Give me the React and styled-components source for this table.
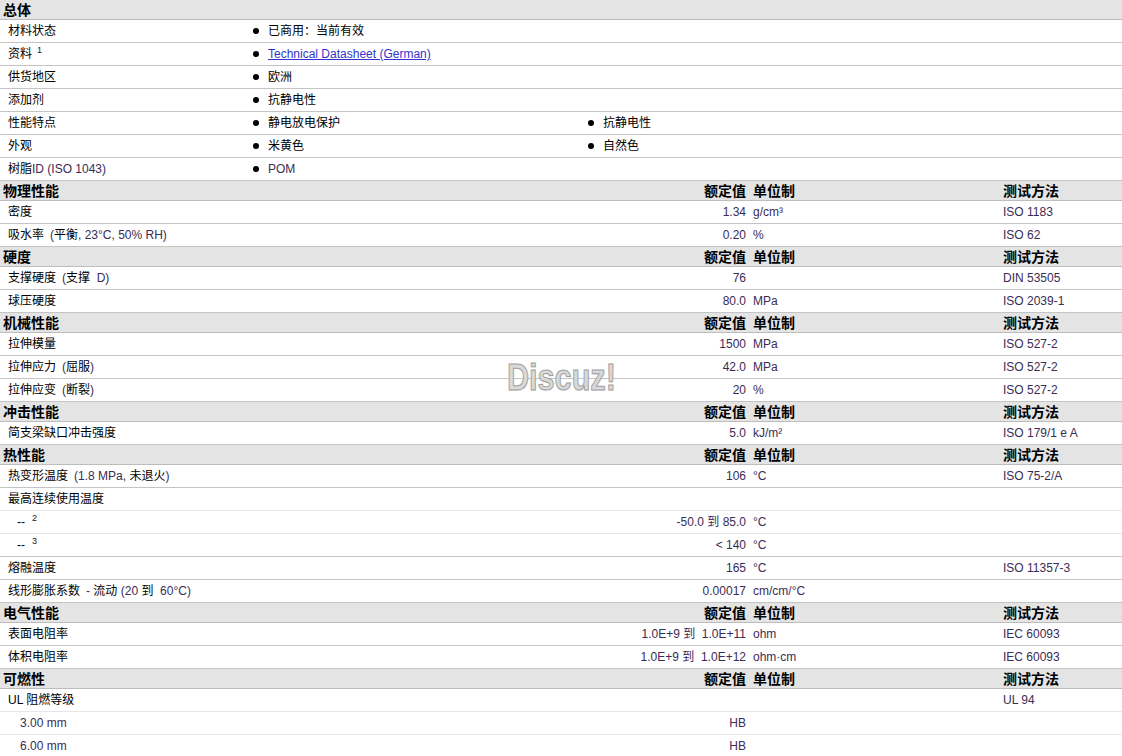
import React from "react";
import styled, { createGlobalStyle } from "styled-components";

const GlobalStyle = createGlobalStyle`
  html, body {
    margin: 0;
    padding: 0;
    background: #fff;
    overflow: hidden;
  }
  body {
    font-family: "Liberation Sans", "Noto Sans CJK SC", Arial, sans-serif;
    font-size: 12px;
    color: #000;
  }
`;

const COLS = "500px 248px 252px 1fr";

const general = [
  { label: "材料状态", items: ["已商用：当前有效"] },
  { label: "资料", sup: "1", items: [{ link: "Technical Datasheet (German)" }] },
  { label: "供货地区", items: ["欧洲"] },
  { label: "添加剂", items: ["抗静电性"] },
  { label: "性能特点", items: ["静电放电保护", "抗静电性"] },
  { label: "外观", items: ["米黄色", "自然色"] },
  { label: "树脂", note: "ID (ISO 1043)", items: [{ latin: "POM" }] },
];

const sections = [
  {
    title: "物理性能",
    rows: [
      { label: "密度", value: "1.34", unit: "g/cm³", method: "ISO 1183" },
      { label: "吸水率", note: ["(", "平衡", ", 23°C, 50% RH)"], value: "0.20", unit: "%", method: "ISO 62" },
    ],
  },
  {
    title: "硬度",
    rows: [
      { label: "支撑硬度", note: ["(", "支撑", "  D)"], value: "76", unit: "", method: "DIN 53505" },
      { label: "球压硬度", value: "80.0", unit: "MPa", method: "ISO 2039-1" },
    ],
  },
  {
    title: "机械性能",
    rows: [
      { label: "拉伸模量", value: "1500", unit: "MPa", method: "ISO 527-2" },
      { label: "拉伸应力", note: ["(", "屈服", ")"], value: "42.0", unit: "MPa", method: "ISO 527-2" },
      { label: "拉伸应变", note: ["(", "断裂", ")"], value: "20", unit: "%", method: "ISO 527-2" },
    ],
  },
  {
    title: "冲击性能",
    rows: [{ label: "简支梁缺口冲击强度", value: "5.0", unit: "kJ/m²", method: "ISO 179/1 e A" }],
  },
  {
    title: "热性能",
    rows: [
      { label: "热变形温度", note: ["(1.8 MPa, ", "未退火", ")"], value: "106", unit: "°C", method: "ISO 75-2/A" },
      { label: "最高连续使用温度", light: true },
      { label: "--", sup: "2", indent: 17, light: true, value: "-50.0 到 85.0", unit: "°C" },
      { label: "--", sup: "3", indent: 17, value: "< 140", unit: "°C" },
      { label: "熔融温度", value: "165", unit: "°C", method: "ISO 11357-3" },
      { label: "线形膨胀系数", note: ["- ", "流动", " (20 ", "到", "  60°C)"], value: "0.00017", unit: "cm/cm/°C" },
    ],
  },
  {
    title: "电气性能",
    rows: [
      { label: "表面电阻率", value: "1.0E+9 到  1.0E+11", unit: "ohm", method: "IEC 60093" },
      { label: "体积电阻率", value: "1.0E+9 到  1.0E+12", unit: "ohm·cm", method: "IEC 60093" },
    ],
  },
  {
    title: "可燃性",
    rows: [
      { label: "UL 阻燃等级", light: true, method: "UL 94" },
      { latinLabel: "3.00 mm", indent: 20, light: true, value: "HB" },
      { latinLabel: "6.00 mm", indent: 20, value: "HB" },
    ],
  },
];

const Label = ({ row }) => (
  <LabelCell $indent={row.indent}>
    {row.latinLabel ? <Latin>{row.latinLabel}</Latin> : row.label}
    {row.sup && <Sup>{row.sup}</Sup>}
    {row.note && (
      <Note>
        {row.note.map((part, i) =>
          i % 2 === 0 ? <Latin key={i}>{part}</Latin> : <span key={i}>{part}</span>
        )}
      </Note>
    )}
  </LabelCell>
);

const GeneralItem = ({ item }) => (
  <Item>
    {typeof item === "string" ? (
      item
    ) : item.link ? (
      <DocLink href="#">{item.link}</DocLink>
    ) : (
      <Latin>{item.latin}</Latin>
    )}
  </Item>
);

const App = () => {
  return (
    <Page>
      <GlobalStyle />
      <Head>
        <Title>总体</Title>
      </Head>
      {general.map((row) => (
        <GeneralRow key={row.label}>
          <LabelCell>
            {row.label}
            {row.sup && <Sup $gap>{row.sup}</Sup>}
            {row.note && <Latin>{row.note}</Latin>}
          </LabelCell>
          {row.items.map((item, i) => (
            <GeneralItem key={i} item={item} />
          ))}
        </GeneralRow>
      ))}

      {sections.map((section) => (
        <React.Fragment key={section.title}>
          <Head>
            <Title>{section.title}</Title>
            <HeadValue>额定值</HeadValue>
            <HeadUnit>单位制</HeadUnit>
            <HeadMethod>测试方法</HeadMethod>
          </Head>
          {section.rows.map((row, i) => (
            <PropRow key={i} $light={row.light}>
              <Label row={row} />
              <Value>{row.value}</Value>
              <Unit>{row.unit}</Unit>
              <Method>{row.method}</Method>
            </PropRow>
          ))}
        </React.Fragment>
      ))}

      <Watermark>Discuz!</Watermark>
    </Page>
  );
};

const Page = styled.div`
  position: relative;
  width: 1122px;
  height: 756px;
  overflow: hidden;
`;

const Head = styled.div`
  display: grid;
  grid-template-columns: ${COLS};
  align-items: center;
  height: 19px;
  background: #e4e4e4;
  border-bottom: 1px solid #bdbdbd;
  font-family: "Noto Sans CJK SC", "Liberation Sans", sans-serif;
  font-weight: 700;
  font-size: 14px;
  line-height: 19px;
  color: #000;
`;

const Title = styled.div`
  padding-left: 3px;
`;

const HeadValue = styled.div`
  text-align: right;
  padding-right: 2px;
`;

const HeadUnit = styled.div`
  padding-left: 5px;
`;

const HeadMethod = styled.div`
  padding-left: 3px;
`;

const Row = styled.div`
  display: grid;
  align-items: center;
  height: 22px;
  line-height: 22px;
  border-bottom: 1px solid ${(p) => (p.$light ? "#e6e6e6" : "#c4c4c4")};
  white-space: pre;
`;

const GeneralRow = styled(Row)`
  grid-template-columns: 250px 335px 1fr;
`;

const PropRow = styled(Row)`
  grid-template-columns: ${COLS};
`;

const LabelCell = styled.div`
  padding-left: ${(p) => p.$indent || 8}px;
`;

const Latin = styled.span`
  color: #3a2c55;
`;

const Note = styled.span`
  margin-left: 6px;
`;

const Sup = styled.sup`
  font-size: 9px;
  line-height: 0;
  margin-left: ${(p) => (p.$gap ? 5 : 7)}px;
  color: #222;
`;

const Item = styled.div`
  display: flex;
  align-items: center;
  padding-left: 3px;

  &::before {
    content: "";
    width: 6px;
    height: 6px;
    border-radius: 50%;
    background: #000;
    margin-right: 9px;
  }
`;

const DocLink = styled.a`
  color: #3333cc;
  text-decoration: underline;
`;

const Value = styled.div`
  text-align: right;
  padding-right: 2px;
  color: #3a2c55;
`;

const Unit = styled.div`
  padding-left: 5px;
  color: #3a2c55;
`;

const Method = styled.div`
  padding-left: 3px;
  color: #3a2c55;
`;

const Watermark = styled.div`
  position: absolute;
  left: 507px;
  top: 358px;
  font-family: "Liberation Sans", Arial, sans-serif;
  font-weight: 700;
  font-size: 36px;
  line-height: 40px;
  color: #d9d9d9;
  -webkit-text-stroke: 1px #a0a0a0;
  transform: scaleX(0.85);
  transform-origin: left center;
  text-shadow: 1px 1px 0 rgba(0, 0, 0, 0.08);
  pointer-events: none;
`;

export default App;
